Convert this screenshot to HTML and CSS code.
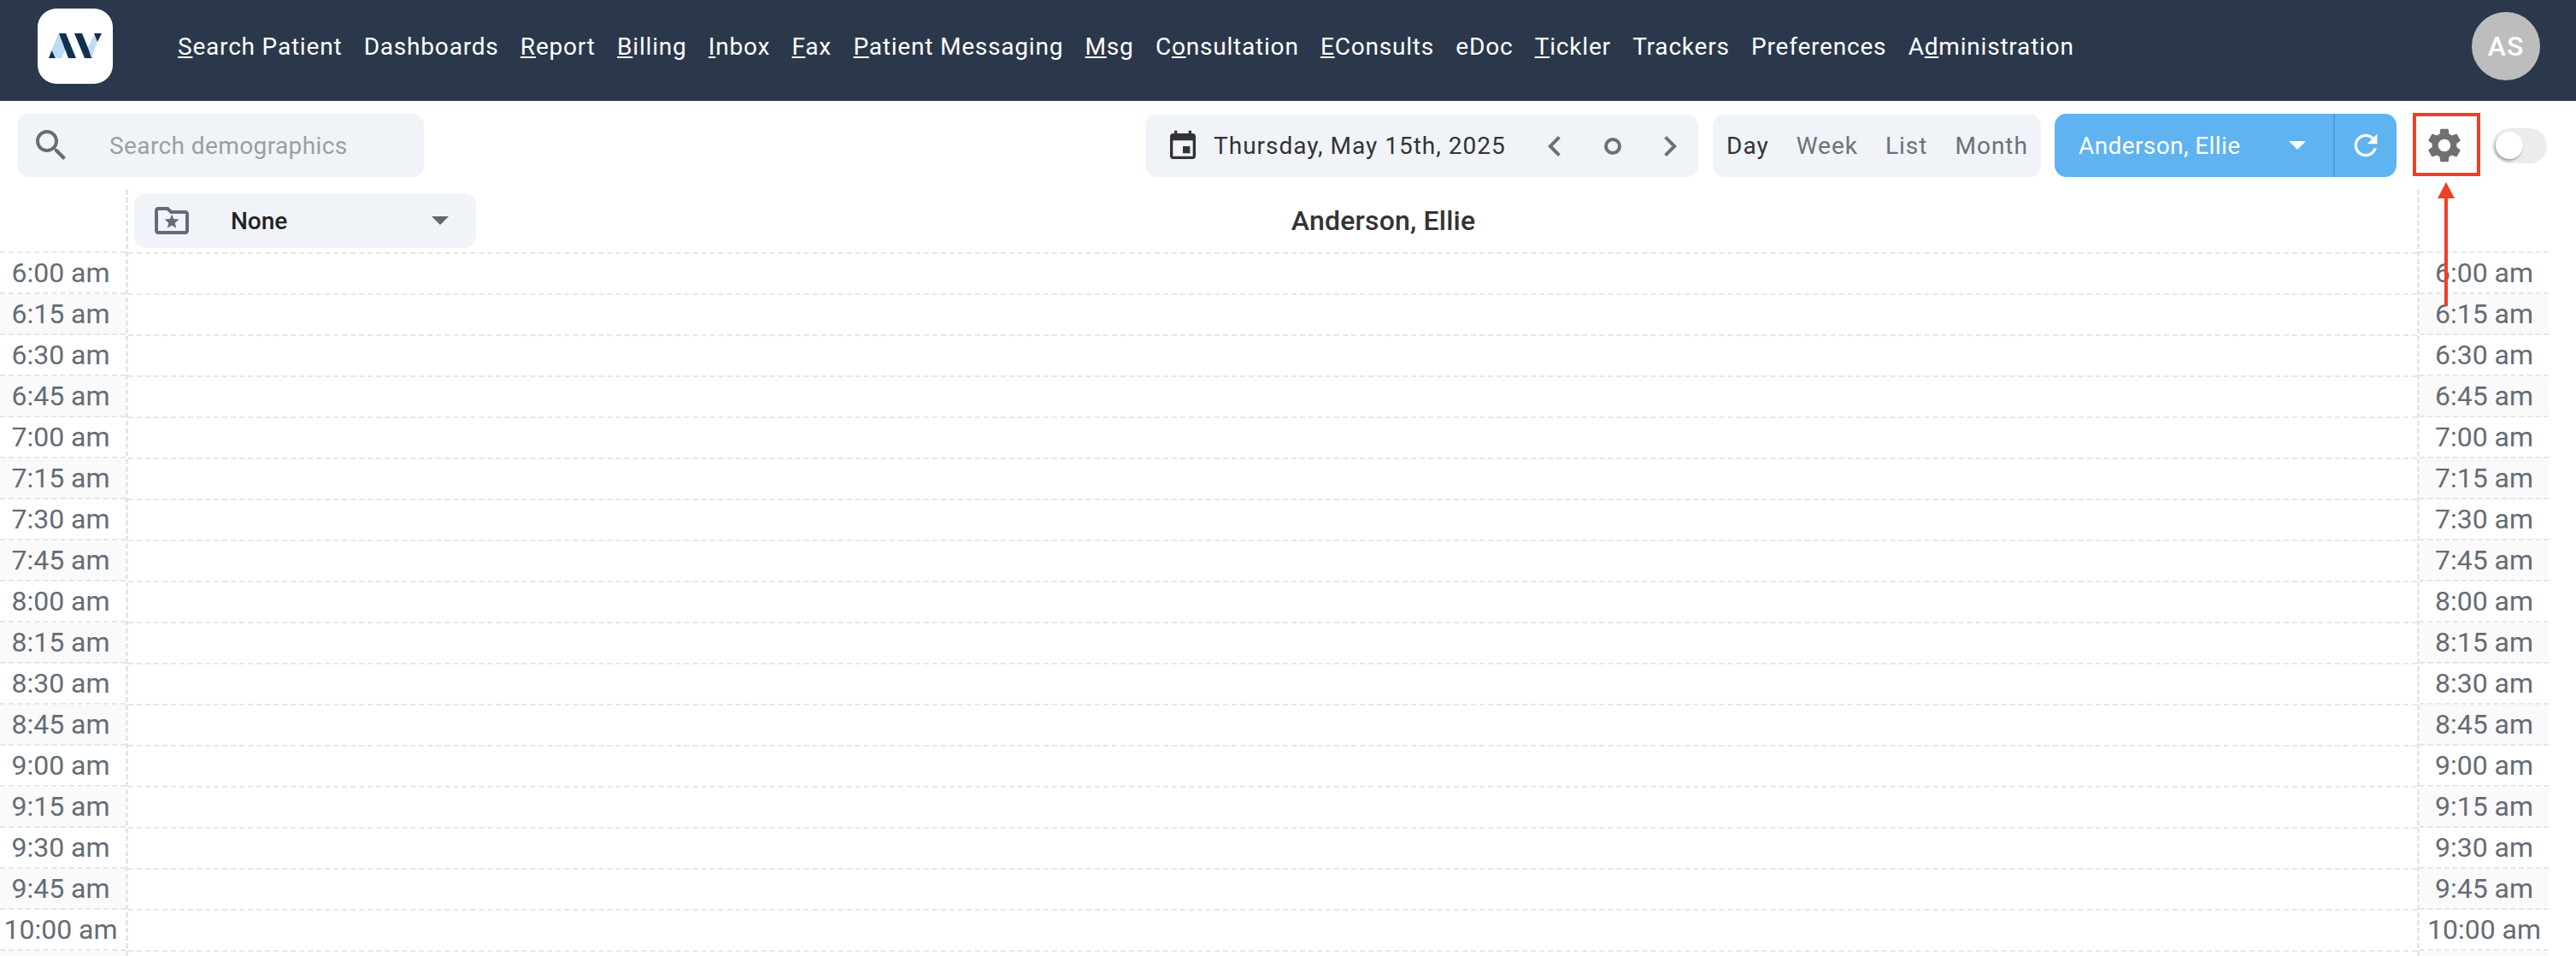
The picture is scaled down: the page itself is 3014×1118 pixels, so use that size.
FILE: index.html
```html
<!DOCTYPE html>
<html lang="en">
<head>
<meta charset="utf-8">
<title>Schedule</title>
<link rel="stylesheet" href="styles.css">
</head>
<body>
<header class="topbar">
  <div class="logo">
    <svg class="logo-mark" viewBox="0 0 62 30">
      <polygon class="lb" points="3,21 11,1 13,1 20,18 15,29 9,29"/>
      <polygon class="db" points="0,29 3.5,20 8,29"/>
      <polygon class="db" points="12,0 20,0 32,29 23,29"/>
      <polygon class="db" points="30,0 39,0 51,29 42,29"/>
      <polygon class="lb" points="46,16 53,2 57,9 50,29"/>
      <polygon class="db" points="53,0 62,0 57,10"/>
    </svg>
  </div>
  <nav class="nav">
    <a><u>S</u>earch Patient</a>
    <a>Dashboards</a>
    <a><u>R</u>eport</a>
    <a><u>B</u>illing</a>
    <a><u>I</u>nbox</a>
    <a><u>F</u>ax</a>
    <a><u>P</u>atient Messaging</a>
    <a><u>M</u>sg</a>
    <a>C<u>o</u>nsultation</a>
    <a><u>E</u>Consults</a>
    <a>eDoc</a>
    <a><u>T</u>ickler</a>
    <a>Trackers</a>
    <a>Preferences</a>
    <a>A<u>d</u>ministration</a>
  </nav>
  <div class="avatar">AS</div>
</header>

<section class="toolbar">
  <div class="search">
    <svg class="ic48 grey" viewBox="0 0 24 24"><path d="M15.5 14h-.79l-.28-.27C15.41 12.59 16 11.11 16 9.5 16 5.91 13.09 3 9.5 3S3 5.91 3 9.5 5.91 16 9.5 16c1.61 0 3.09-.59 4.23-1.57l.27.28v.79l5 4.99L20.49 19l-4.99-5zm-6 0C7.01 14 5 11.99 5 9.5S7.01 5 9.5 5 14 7.01 14 9.5 11.99 14 9.5 14z"/></svg>
    <span class="placeholder">Search demographics</span>
  </div>
  <div class="date">
    <svg class="ic40 dark" viewBox="0 0 24 24"><path d="M17 12h-5v5h5v-5zM16 1v2H8V1H6v2H5c-1.11 0-1.99.9-1.99 2L3 19c0 1.1.89 2 2 2h14c1.1 0 2-.9 2-2V5c0-1.1-.9-2-2-2h-1V1h-2zm3 18H5V8h14v11z"/></svg>
    <span class="date-text">Thursday, May 15th, 2025</span>
    <svg class="ic48 mid chev-l" viewBox="0 0 24 24"><path d="M15.41 7.41 14 6l-6 6 6 6 1.41-1.41L10.83 12z"/></svg>
    <span class="today"></span>
    <svg class="ic48 mid chev-r" viewBox="0 0 24 24"><path d="M10 6 8.59 7.41 13.17 12l-4.58 4.59L10 18l6-6z"/></svg>
  </div>
  <div class="views">
    <span class="view active">Day</span>
    <span class="view">Week</span>
    <span class="view">List</span>
    <span class="view">Month</span>
  </div>
  <div class="provider">
    <div class="provider-main">
      <span class="provider-name">Anderson, Ellie</span>
      <span class="caret caret-white"></span>
    </div>
    <div class="provider-refresh">
      <svg class="ic40 white" viewBox="0 0 24 24"><path d="M17.65 6.35C16.2 4.9 14.21 4 12 4c-4.42 0-7.99 3.58-7.99 8s3.57 8 7.99 8c3.73 0 6.84-2.55 7.73-6h-2.08c-.82 2.33-3.04 4-5.65 4-3.31 0-6-2.69-6-6s2.69-6 6-6c1.66 0 3.14.69 4.22 1.78L13 11h7V4l-2.35 2.35z"/></svg>
    </div>
  </div>
  <div class="gear">
    <svg class="ic48 mid" viewBox="0 0 24 24"><path d="M19.14 12.94c.04-.3.06-.61.06-.94 0-.32-.02-.64-.07-.94l2.03-1.58c.18-.14.23-.41.12-.61l-1.92-3.32c-.12-.22-.37-.29-.59-.22l-2.39.96c-.5-.38-1.03-.7-1.62-.94l-.36-2.54c-.04-.24-.24-.41-.48-.41h-3.84c-.24 0-.43.17-.47.41l-.36 2.54c-.59.24-1.13.57-1.62.94l-2.39-.96c-.22-.08-.47 0-.59.22L2.74 8.87c-.12.21-.08.47.12.61l2.03 1.58c-.05.3-.09.63-.09.94s.02.64.07.94l-2.03 1.58c-.18.14-.23.41-.12.61l1.92 3.32c.12.22.37.29.59.22l2.39-.96c.5.38 1.03.7 1.62.94l.36 2.54c.05.24.24.41.48.41h3.84c.24 0 .44-.17.47-.41l.36-2.54c.59-.24 1.13-.56 1.62-.94l2.39.96c.22.08.47 0 .59-.22l1.92-3.32c.12-.22.07-.47-.12-.61l-2.01-1.58zM12 15.6c-1.98 0-3.6-1.62-3.6-3.6s1.62-3.6 3.6-3.6 3.6 1.62 3.6 3.6-1.62 3.6-3.6 3.6z"/></svg>
  </div>
  <div class="toggle"><span class="knob"></span></div>
</section>

<main class="schedule">
  <div class="col-times">
    <div class="time-head"></div>
    <div class="time alt-0">6:00 am</div>
    <div class="time alt-1">6:15 am</div>
    <div class="time alt-0">6:30 am</div>
    <div class="time alt-1">6:45 am</div>
    <div class="time alt-0">7:00 am</div>
    <div class="time alt-1">7:15 am</div>
    <div class="time alt-0">7:30 am</div>
    <div class="time alt-1">7:45 am</div>
    <div class="time alt-0">8:00 am</div>
    <div class="time alt-1">8:15 am</div>
    <div class="time alt-0">8:30 am</div>
    <div class="time alt-1">8:45 am</div>
    <div class="time alt-0">9:00 am</div>
    <div class="time alt-1">9:15 am</div>
    <div class="time alt-0">9:30 am</div>
    <div class="time alt-1">9:45 am</div>
    <div class="time alt-0">10:00 am</div>
    <div class="time alt-1"></div>
  </div>
  <div class="col-main">
    <div class="main-head">
      <div class="select">
        <svg class="ic48 slate" viewBox="0 0 24 24"><path d="M20 6h-8l-2-2H4c-1.1 0-2 .9-2 2v12c0 1.1.9 2 2 2h16c1.1 0 2-.9 2-2V8c0-1.1-.9-2-2-2zm0 12H4V6h5.17l2 2H20v10z"/><path d="M12.6 16.6l.75-3.05-2.35-2.05 3.1-.25L15.2 8.4l1.1 2.85 3.1.25-2.35 2.05.75 3.05-2.6-1.6z" transform="translate(-3.2 -.2)"/></svg>
        <span class="select-label">None</span>
        <span class="caret caret-grey"></span>
      </div>
      <div class="main-title">Anderson, Ellie</div>
    </div>
    <div class="slot"></div><div class="slot"></div><div class="slot"></div><div class="slot"></div>
    <div class="slot"></div><div class="slot"></div><div class="slot"></div><div class="slot"></div>
    <div class="slot"></div><div class="slot"></div><div class="slot"></div><div class="slot"></div>
    <div class="slot"></div><div class="slot"></div><div class="slot"></div><div class="slot"></div>
    <div class="slot"></div><div class="slot"></div>
  </div>
  <div class="col-times col-times-right">
    <div class="time-head"></div>
    <div class="time alt-0">6:00 am</div>
    <div class="time alt-1">6:15 am</div>
    <div class="time alt-0">6:30 am</div>
    <div class="time alt-1">6:45 am</div>
    <div class="time alt-0">7:00 am</div>
    <div class="time alt-1">7:15 am</div>
    <div class="time alt-0">7:30 am</div>
    <div class="time alt-1">7:45 am</div>
    <div class="time alt-0">8:00 am</div>
    <div class="time alt-1">8:15 am</div>
    <div class="time alt-0">8:30 am</div>
    <div class="time alt-1">8:45 am</div>
    <div class="time alt-0">9:00 am</div>
    <div class="time alt-1">9:15 am</div>
    <div class="time alt-0">9:30 am</div>
    <div class="time alt-1">9:45 am</div>
    <div class="time alt-0">10:00 am</div>
    <div class="time alt-1"></div>
  </div>
</main>

<div class="callout-box"></div>
<svg class="callout-arrow" viewBox="0 0 20 145"><polygon points="10,0 20,19 12,19 12,145 8,145 8,19 0,19"/></svg>
</body>
</html>
```
FILE: styles.css
```css
* { box-sizing: border-box; }
html, body { margin: 0; height: 1118px; overflow: hidden; background: #fff; }
body { font-family: Roboto, "Liberation Sans", sans-serif; position: relative; }

svg { display: block; flex: none; }
.ic48 { width: 48px; height: 48px; }
.ic40 { width: 40px; height: 40px; }
.grey { fill: #666d73; }
.dark { fill: #333; }
.mid { fill: #707070; }
.white { fill: #fff; }
.slate { fill: #646c75; }

.topbar { display: flex; align-items: center; height: 118px; background: #2b374b; padding: 0 42px 0 44px; }
.logo { width: 88px; height: 88px; border-radius: 22px; background: #fff; display: flex; align-items: center; justify-content: center; margin-top: -10px; }
.logo-mark { width: 62px; height: 30px; }
.lb { fill: #bcdcf3; }
.db { fill: #12304f; }
.nav { display: flex; gap: 25.3px; margin-left: 76px; font-size: 28px; color: #fff; letter-spacing: 0.8px; margin-top: -10px; }
.avatar { margin-left: auto; width: 80px; height: 80px; border-radius: 50%; background: #bdbdbd; color: #fff; font-size: 32px; font-weight: 500; letter-spacing: 1px; display: flex; align-items: center; justify-content: center; margin-top: -10px; }

.toolbar { display: flex; align-items: flex-start; height: 104px; padding: 15px 0 0 20px; }
.search, .date, .views { background: #f0f3f8; border-radius: 14px; height: 74px; display: flex; align-items: center; }
.search { width: 476px; padding-left: 16px; }
.placeholder { margin-left: 44px; font-size: 28px; color: #9a9ea3; letter-spacing: 0.4px; }
.date { margin-left: 844px; width: 647px; padding-left: 24px; margin-top: 1px; height: 73px; }
.date-text { margin-left: 16px; font-size: 28px; color: #333; letter-spacing: 1px; white-space: nowrap; }
.chev-l { margin-left: 33px; }
.today { width: 20px; height: 20px; border: 4px solid #707070; border-radius: 50%; margin-left: 34px; }
.chev-r { margin-left: 33px; }
.views { margin-left: 17px; width: 384px; padding-left: 16px; gap: 32px; font-size: 28px; color: #6c7177; letter-spacing: 1px; margin-top: 1px; height: 73px; }
.view.active { color: #333; }
.provider { margin-left: 16px; width: 400px; height: 74px; background: #5eb3f0; border-radius: 14px; display: flex; color: #fff; }
.provider-main { width: 328px; display: flex; align-items: center; padding-left: 28px; border-right: 2px solid #4f9ad6; }
.provider-name { font-size: 28px; letter-spacing: 0.4px; white-space: nowrap; }
.provider-refresh { flex: 1; display: flex; align-items: center; justify-content: center; }
.caret { width: 0; height: 0; border-left: 10px solid transparent; border-right: 10px solid transparent; }
.caret-white { border-top: 10px solid #fff; margin-left: auto; margin-right: 32px; }
.caret-grey { border-top: 10px solid #666; margin-left: auto; }
.gear { margin-left: 19px; width: 79px; height: 74px; display: flex; align-items: center; justify-content: center; padding-right: 5px; }
.toggle { margin-left: 14px; margin-top: 17px; width: 64px; height: 41px; border-radius: 21px; background: #ececec; padding: 4px; }
.knob { display: block; width: 32px; height: 32px; border-radius: 50%; background: #fff; box-shadow: -1px 2px 3px rgba(0,0,0,.35); }

.schedule { display: flex; width: 2982px; height: 896px; overflow: hidden; }
.col-times { width: 150px; flex: none; border-right: 3px dashed #e6e6e6; }
.col-times .time { padding-right: 5px; }
.col-times-right { width: 154px; border-right: none; border-left: 3px dashed #e6e6e6; }
.col-times-right .time { padding-right: 0; }
.time-head { height: 74px; border-bottom: 2px dashed #e6e6e6; }
.time { height: 48px; border-bottom: 2px dashed #e6e6e6; font-size: 32px; color: #646c75; text-align: center; line-height: 47px; white-space: nowrap; }
.alt-1 { background: #fafafa; }
.col-main { flex: 1; min-width: 0; }
.main-head { height: 75px; border-bottom: 2px dashed #e6e6e6; display: flex; align-items: flex-start; padding: 4px 0 0 7px; }
.select { width: 400px; height: 64px; background: #f0f3f8; border-radius: 14px; display: flex; align-items: center; padding: 0 32px 0 20px; }
.select-label { margin-left: 45px; font-size: 28px; font-weight: 500; color: #222; }
.main-title { flex: 1; text-align: center; padding-right: 148px; font-size: 32px; font-weight: 500; color: #333; line-height: 64px; letter-spacing: 0.2px; }
.slot { height: 48px; border-bottom: 2px dashed #e6e6e6; }

.callout-box { position: absolute; left: 2823px; top: 132px; width: 79px; height: 74px; border: 4px solid #ee4026; }
.callout-arrow { position: absolute; left: 2852px; top: 213px; width: 20px; height: 145px; fill: #ee4026; }
```
